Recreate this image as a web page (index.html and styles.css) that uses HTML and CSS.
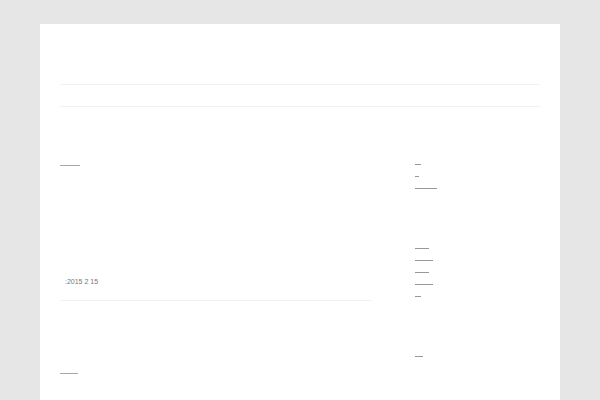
FILE: index.html
```html
<!DOCTYPE html>
<html>
<head>
<meta charset="utf-8">
<link rel="stylesheet" href="styles.css">
</head>
<body>
<div class="page">
  <header class="site-header"></header>
  <nav class="site-nav"></nav>
  <div class="wrap">
    <main class="main">
      <article class="post">
        <a class="link blue w20" href="#"></a>
        <div class="meta">:2015 2 15</div>
      </article>
      <article class="post second">
        <a class="link blue w18" href="#"></a>
      </article>
    </main>
    <aside class="sidebar">
      <ul class="widget first">
        <li><a class="link gray w6" href="#"></a></li>
        <li><a class="link gray w4" href="#"></a></li>
        <li><a class="link gray w22" href="#"></a></li>
      </ul>
      <ul class="widget">
        <li><a class="link gray w14" href="#"></a></li>
        <li><a class="link gray w18" href="#"></a></li>
        <li><a class="link gray w14" href="#"></a></li>
        <li><a class="link gray w18" href="#"></a></li>
        <li><a class="link gray w6" href="#"></a></li>
      </ul>
      <ul class="widget">
        <li><a class="link gray w8" href="#"></a></li>
      </ul>
    </aside>
  </div>
</div>
</body>
</html>
```
FILE: styles.css
```css
html, body { margin: 0; padding: 0; }
body {
  background: #e6e6e6;
  font-family: "Liberation Sans", Arial, sans-serif;
  padding-top: 24px;
  height: 400px;
  box-sizing: border-box;
  overflow: hidden;
}
.page {
  width: 480px;
  margin: 0 auto;
  background: #fff;
  padding: 0 20px;
  min-height: 376px;
}
.site-header {
  height: 60px;
  border-bottom: 1px solid #f2f2f2;
}
.site-nav {
  height: 21px;
  border-bottom: 1px solid #f2f2f2;
}
.wrap {
  display: flex;
}
.main {
  width: 312px;
}
.post {
  padding-top: 58px;
  height: 135px;
  border-bottom: 1px solid #f2f2f2;
}
.post.second {
  border-bottom: none;
  padding-top: 72px;
  height: auto;
}
.link {
  display: block;
  height: 1px;
}
.link.blue { background-color: #7fb0de; }
.link.gray { background-color: #999999; }
.w4 { width: 4px; }
.w6 { width: 6px; }
.w8 { width: 8px; }
.w14 { width: 14px; }
.w18 { width: 18px; }
.w20 { width: 20px; }
.w22 { width: 22px; }
.meta {
  margin-top: 112px;
  margin-left: 5px;
  font-size: 7px;
  line-height: 8px;
  color: #777;
}
.sidebar {
  margin-left: 43px;
  flex: 1;
}
.widget {
  list-style: none;
  margin: 0;
  padding: 0;
}
.widget li {
  height: 12px;
  display: flex;
  align-items: flex-end;
}
.widget.first { margin-top: 46px; }
.widget + .widget { margin-top: 48px; }
```
